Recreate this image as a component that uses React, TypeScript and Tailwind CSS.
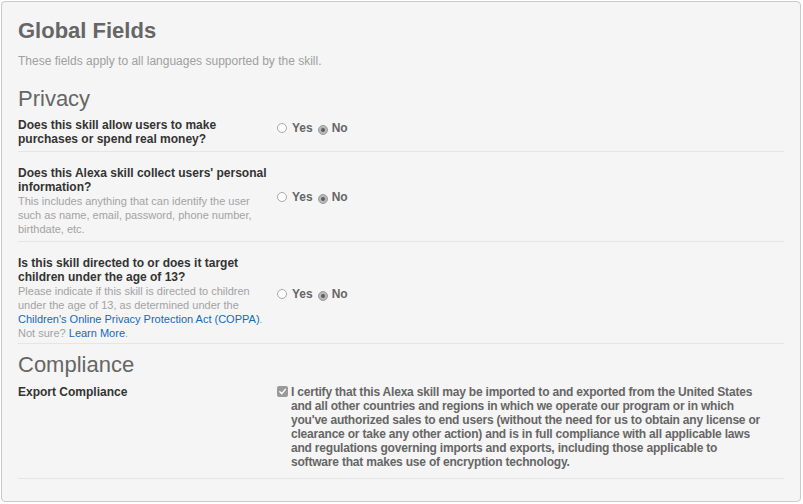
import React from 'react';

function Radio({ checked }: { checked?: boolean }) {
    if (checked) {
        return (
            <span className="inline-flex h-[10px] w-[10px] items-center justify-center rounded-full border border-[#9d9d9d] bg-[#b8b8b8]">
                <span className="h-[4px] w-[4px] rounded-full bg-[#5e5e5e]" />
            </span>
        );
    }
    return <span className="inline-block h-[10px] w-[10px] rounded-full border border-[#a9a9a9] bg-white" />;
}

function YesNo() {
    return (
        <div className="mb-[8px] flex items-center text-[12px] font-bold leading-[14px] text-[#666]">
            <Radio />
            <span className="ml-[5px]">Yes</span>
            <span className="ml-[5px]"><Radio checked /></span>
            <span className="ml-[4px]">No</span>
        </div>
    );
}

function Row({ label, desc, pb = 'pb-[5px]' }: { label: string; desc?: React.ReactNode; pb?: string }) {
    return (
        <div className={'flex items-center border-b border-[#e5e5e5] ' + pb}>
            <div className="w-[252px] shrink-0">
                <div className="text-[12px] font-bold leading-[14px] text-[#333]">{label}</div>
                {desc && <div className="text-[11px] leading-[14px] text-[#a3a3a3]">{desc}</div>}
            </div>
            <div className="ml-[7px]">
                <YesNo />
            </div>
        </div>
    );
}

export default function App() {
    return (
        <div className="min-h-screen bg-white p-px font-['Liberation_Sans',Arial,sans-serif]">
            <div className="h-[501px] w-[800px] rounded-[4px] border border-[#cacaca] bg-[#f5f5f5] px-4 pt-4">
                <h1 className="text-[22px] font-bold leading-[26px] text-[#666]">Global Fields</h1>
                <p className="mt-2 text-[12px] leading-[18px] text-[#a0a0a0]">
                    These fields apply to all languages supported by the skill.
                </p>

                {/* Privacy */}
                <h2 className="mt-4 text-[22px] leading-[26px] text-[#666]">Privacy</h2>
                <div className="mt-[6px]">
                    <Row label="Does this skill allow users to make purchases or spend real money?" />
                    <div className="pt-[14px]">
                        <Row
                            label="Does this Alexa skill collect users' personal information?"
                            desc="This includes anything that can identify the user such as name, email, password, phone number, birthdate, etc."
                        />
                    </div>
                    <div className="pt-[14px]">
                        <Row
                            pb="pb-[3px]"
                            label="Is this skill directed to or does it target children under the age of 13?"
                            desc={
                                <>
                                    Please indicate if this skill is directed to children under the age of 13, as determined under the{' '}
                                    <span className="text-[#0f6cc2]">Children's Online Privacy Protection Act (COPPA)</span>. Not sure?{' '}
                                    <span className="text-[#0f6cc2]">Learn More</span>.
                                </>
                            }
                        />
                    </div>
                </div>

                {/* Compliance */}
                <h2 className="mt-[8px] text-[22px] leading-[26px] text-[#666]">Compliance</h2>
                <div className="mt-[7px] flex border-b border-[#e5e5e5] pb-[9px]">
                    <div className="w-[252px] shrink-0 text-[12px] font-bold leading-[14px] text-[#333]">Export Compliance</div>
                    <div className="ml-[7px] flex items-start">
                        <span className="mt-[1px] inline-flex h-[11px] w-[11px] shrink-0 items-center justify-center rounded-[2px] bg-[#9a9a9a]">
                            <svg width="9" height="9" viewBox="0 0 10 10">
                                <path d="M2 5.2 L4.2 7.4 L8.2 2.6" fill="none" stroke="white" strokeWidth="1.6" strokeLinecap="round" strokeLinejoin="round" />
                            </svg>
                        </span>
                        <p className="ml-[3px] w-[474px] text-[12px] font-bold leading-[14px] tracking-[-0.2px] text-[#666]">
                            I certify that this Alexa skill may be imported to and exported from the United States and all other countries and regions in which we operate our program or in which you've authorized sales to end users (without the need for us to obtain any license or clearance or take any other action) and is in full compliance with all applicable laws and regulations governing imports and exports, including those applicable to software that makes use of encryption technology.
                        </p>
                    </div>
                </div>
            </div>
        </div>
    );
}
